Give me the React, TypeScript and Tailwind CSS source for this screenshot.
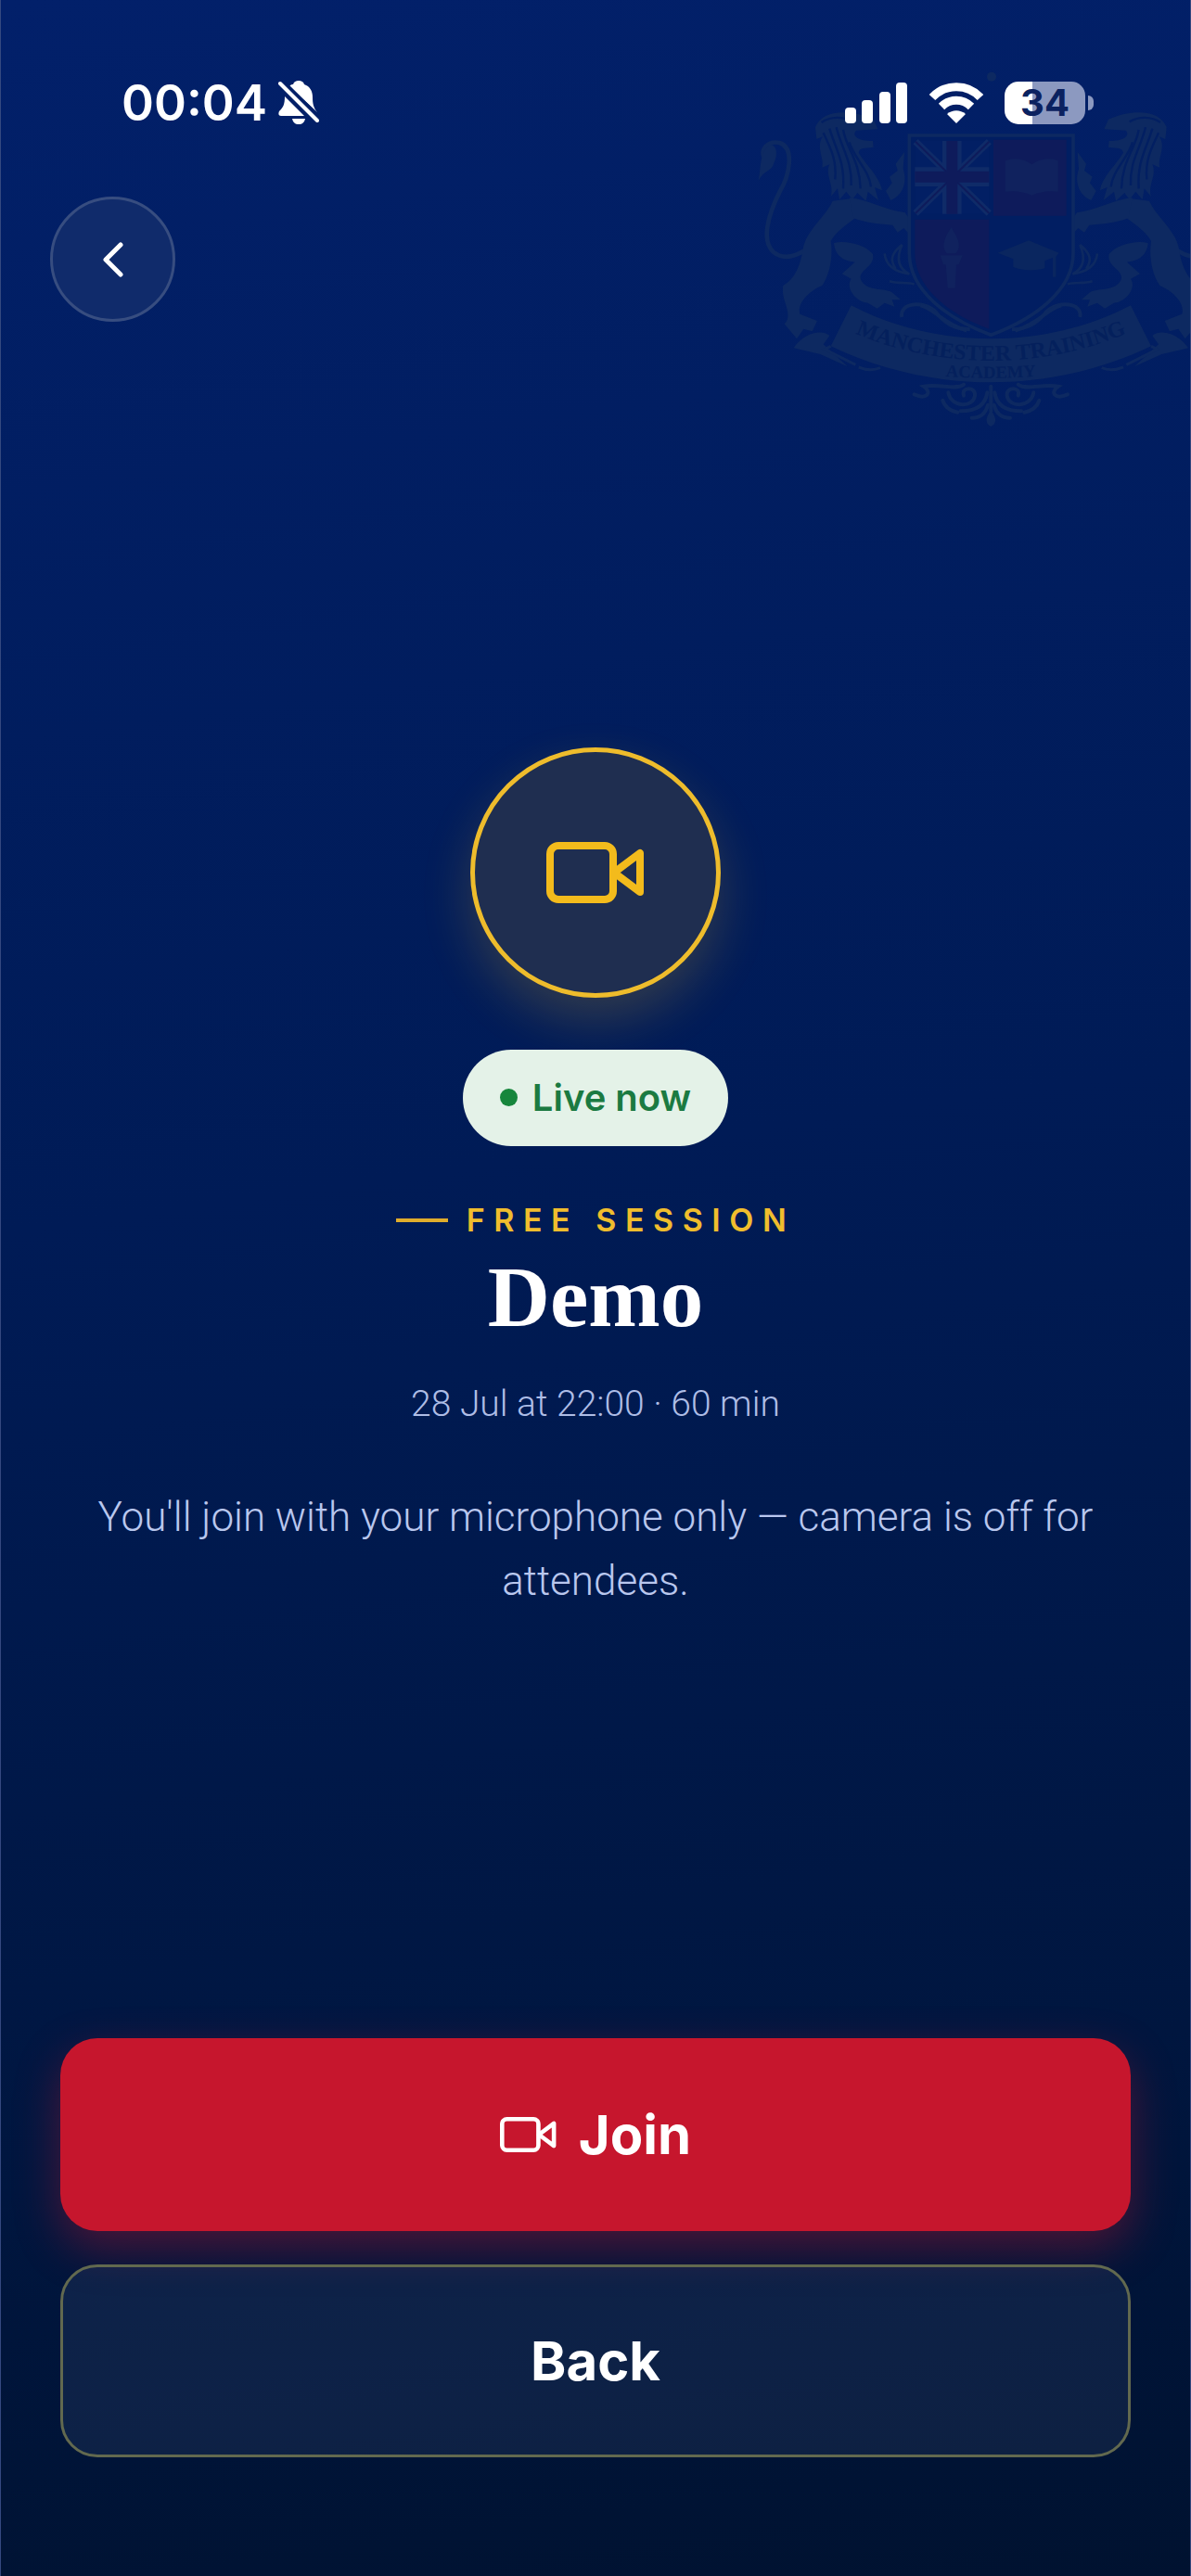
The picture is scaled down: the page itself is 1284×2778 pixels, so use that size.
import type { ReactNode } from "react"

interface IVideoIcon {
  className: string
  strokeWidth: number
}

const VideoIcon = ({ className, strokeWidth }: IVideoIcon) => (
  <svg
    viewBox="0 0 106 66"
    className={className}
    fill="none"
    stroke="currentColor"
    strokeWidth={strokeWidth}
    strokeLinejoin="round"
    aria-hidden="true"
  >
    <rect x="4" y="4" width="68" height="58" rx="9" />
    <path d="M73 33 L101 12 V54 Z" />
  </svg>
)

const BellOffIcon = () => (
  <svg viewBox="0 0 44 48" className="h-12 w-11" fill="#fff" aria-hidden="true">
    <path d="M12 6 C14 4 15 4 16 4 C17 1 19 0 22 0 C25 0 27 1 28 4 C34 6 37 11 37 18 C37 25 38 29 42 34 Z" />
    <path d="M7 17 L28 38 H3 C0 38 0 35 1 33 C5 29 7 26 7 17 Z" />
    <path d="M15 41 H29 C28 45 26 47 22 47 C18 47 16 45 15 41 Z" />
    <path d="M2 3 L42 43" stroke="#fff" strokeWidth="4" strokeLinecap="round" />
    <path d="M7 2 L43 38" stroke="#011f67" strokeWidth="3" />
  </svg>
)

const SignalIcon = () => (
  <svg viewBox="0 0 68 44" className="h-11 w-[68px]" fill="#fff" aria-hidden="true">
    <rect x="0" y="27" width="12" height="17" rx="4" />
    <rect x="18" y="19" width="12" height="25" rx="4" />
    <rect x="37" y="10" width="12" height="34" rx="4" />
    <rect x="55" y="0" width="12" height="44" rx="4" />
  </svg>
)

const WifiIcon = () => (
  <svg viewBox="0 0 60 44" className="h-11 w-[60px]" aria-hidden="true">
    <g fill="none" stroke="#fff" strokeWidth="9">
      <path d="M4 16 C18 1 42 1 56 16" />
      <path d="M14 26 C23 17 37 17 46 26" />
    </g>
    <path d="M30 44 L20 34 C26 29 34 29 40 34 Z" fill="#fff" />
  </svg>
)

const Lion = () => (
  <g>
    <path
      d="M142 345 C112 300 150 275 185 282 C235 300 215 390 185 440 C145 520 125 600 165 636 C195 660 235 650 270 628"
      fill="none"
      stroke="#0d2961"
      strokeWidth="14"
    />
    <path d="M116 405 C126 360 116 330 150 288 C182 286 176 330 166 348 C158 376 134 370 116 405 Z" />
    <path d="M300 232 C318 180 400 168 488 206 L502 238 L432 242 C416 260 440 276 486 276 L488 296 C460 302 444 294 440 314 C462 352 508 390 516 436 L492 426 L504 468 L470 440 L464 470 L436 444 L420 466 L400 440 L378 466 L372 430 L350 456 C362 420 330 386 346 352 L322 362 C330 330 300 296 324 262 L304 270 Z" />
    <path d="M356 470 C334 520 276 560 262 616 C252 680 236 720 196 744 C186 790 232 836 200 868 L240 916 L262 884 L290 892 L306 858 L250 836 C240 800 282 760 322 744 C352 700 356 640 350 600 C372 560 420 536 448 510 L420 462 Z" />
    <path d="M410 460 C470 464 522 500 590 508 L612 540 L606 580 L586 558 L566 572 L550 548 C510 546 460 540 424 526 Z" />
    <path d="M588 312 L560 350 L566 372 L540 392 L548 412 L528 438 L544 468 C584 450 598 410 584 366 Z" />
    <path d="M360 606 C400 596 462 612 486 642 C494 684 442 690 446 722 C464 764 516 750 546 764 L576 790 L548 790 L556 812 L524 800 L500 818 L470 800 C430 796 396 750 416 722 L386 706 L428 668 C394 664 364 650 360 606 Z" />
    <path d="M230 946 C262 898 320 884 346 906 L326 934 L404 1006 L316 966 Z" />
    <path d="M524 640 C528 680 560 700 604 706 C570 690 560 660 580 612 C546 640 540 660 560 690 M540 730 C570 740 600 730 620 740" fill="none" stroke="#0d2961" strokeWidth="8" />
    {/* mane strands */}
    <g fill="none" stroke="#021f62" strokeWidth="7">
      <path d="M320 216 C350 196 390 196 420 214" />
      <path d="M326 250 C350 300 370 340 364 400" />
      <path d="M346 236 C364 300 396 340 390 430" />
      <path d="M368 232 C384 300 420 340 416 420" />
      <path d="M390 240 C400 300 444 340 446 430" />
      <path d="M410 280 C424 330 474 370 480 424" />
    </g>
  </g>
)

const Crest = () => (
  <svg
    viewBox="0 0 1512 1260"
    className="pointer-events-none absolute top-[60px] right-0 -z-10 h-[420px] w-[504px]"
    fill="#0d2961"
    aria-hidden="true"
  >
    <circle cx="870" cy="68" r="15" />
    <Lion />
    <g transform="translate(1736 0) scale(-1 1)">
      <Lion />
    </g>

    {/* shield */}
    <path d="M604 258 H1134 V640 C1134 760 1010 850 868 904 C726 850 604 760 604 640 Z" fill="#011e62" />
    <path d="M622 276 H862 V512 H622 Z" fill="#021f64" />
    <path d="M876 272 H1112 V518 H876 Z" fill="#0e1b5b" />
    <path d="M622 530 H862 V884 C730 836 622 750 622 640 Z" fill="#0e1b5b" />
    <g stroke="#0f2b68" fill="none">
      <path d="M624 278 L862 510 M862 278 L624 510" strokeWidth="22" />
      <path d="M742 276 V512 M622 392 H862" strokeWidth="62" />
    </g>
    <g stroke="#0e1b5b" fill="none">
      <path d="M624 278 L862 510 M862 278 L624 510" strokeWidth="6" />
      <path d="M742 276 V512 M622 392 H862" strokeWidth="36" />
    </g>
    <path d="M915 340 C945 328 975 334 1000 352 C1025 334 1055 328 1085 340 V440 C1055 436 1025 440 1000 452 C975 440 945 436 915 440 Z" fill="#10225e" />
    <path d="M740 556 C716 590 706 620 726 640 H754 C776 616 760 590 740 556 Z M704 646 H776 L764 676 H756 L752 752 H728 L722 676 H714 Z" fill="#10225e" />
    <path d="M890 638 L990 598 L1088 638 L1078 650 V716 H1068 V654 L1042 664 V688 C1010 698 970 696 940 684 V658 Z" fill="#0a265f" />
    <path
      d="M604 258 H1134 V640 C1134 760 1010 850 868 904 C726 850 604 760 604 640 Z"
      fill="none"
      stroke="#0d2961"
      strokeWidth="11"
    />

    {/* scrollwork between shield and ribbon */}
    <g fill="none" stroke="#0d2961" strokeWidth="12">
      <path d="M580 846 C570 800 650 790 690 830 C720 870 760 886 800 886" />
      <path d="M1156 846 C1166 800 1086 790 1046 830 C1016 870 976 886 936 886" />
      <path d="M640 808 C690 820 700 860 790 890" />
      <path d="M1096 808 C1046 820 1036 860 946 890" />
    </g>

    {/* ribbon */}
    <path d="M416 808 C690 952 1046 952 1320 808 L1386 940 C1060 1096 676 1096 350 940 Z" />
    <g fill="none" stroke="#0d2961" strokeWidth="9">
      <path d="M350 940 L330 950 L430 1000 M440 1008 C470 1020 490 1018 510 1010" />
      <path d="M1386 940 L1406 950 L1306 1000 M1296 1008 C1266 1020 1246 1018 1226 1010" />
    </g>
    <path id="ribbon-upper" d="M400 886 C690 1020 1046 1020 1336 886" fill="none" />
    <path id="ribbon-lower" d="M680 1034 C800 1046 936 1046 1056 1034" fill="none" />
    <g fill="#04205c" fontFamily="'Liberation Serif', serif" fontWeight="700" textAnchor="middle">
      <text fontSize="72">
        <textPath href="#ribbon-upper" startOffset="50%">
          MANCHESTER TRAINING
        </textPath>
      </text>
      <text fontSize="56">
        <textPath href="#ribbon-lower" startOffset="50%">
          ACADEMY
        </textPath>
      </text>
    </g>

    {/* foliage under the ribbon */}
    <g fill="none" stroke="#0d2961" strokeWidth="12" strokeLinecap="round">
      <path d="M868 1070 V1150" />
      <path d="M620 1096 C660 1114 680 1090 650 1070 C700 1060 760 1084 780 1064" />
      <path d="M1116 1096 C1076 1114 1056 1090 1086 1070 C1036 1060 976 1084 956 1064" />
      <path d="M780 1100 C770 1070 820 1070 816 1100 C810 1140 740 1140 730 1090" />
      <path d="M956 1100 C966 1070 916 1070 920 1100 C926 1140 996 1140 1006 1090" />
      <path d="M856 1090 C850 1130 820 1150 770 1150 M880 1090 C886 1130 916 1150 966 1150" />
      <path d="M712 1116 C720 1140 740 1150 760 1154 M1024 1116 C1016 1140 996 1150 976 1154" />
      <path d="M858 1130 C850 1160 830 1172 806 1172 M878 1130 C886 1160 906 1172 930 1172" />
    </g>
    <path d="M868 1140 C874 1160 884 1170 882 1182 C880 1194 874 1196 868 1200 C862 1196 856 1194 854 1182 C852 1170 862 1160 868 1140 Z" />
  </svg>
)

const StatusBar = () => (
  <div className="flex items-center justify-between pt-[84px] pr-[104px] pl-[130px]">
    <div className="flex items-center gap-3">
      <span className="text-[53px] leading-[54px] font-semibold">00:04</span>
      <BellOffIcon />
    </div>
    <div className="flex items-center gap-[22px]">
      <SignalIcon />
      <WifiIcon />
      <div className="flex items-center gap-[3px]">
        <span className="flex h-[46px] w-[87px] items-center justify-center rounded-[15px] bg-[linear-gradient(90deg,#fff_34%,#8c99c0_34%)] text-[40px] leading-none font-bold text-[#0b2260]">
          34
        </span>
        <span className="h-4 w-[6px] rounded-r-full bg-[#8c99c0]" />
      </div>
    </div>
  </div>
)

interface IActionButton {
  className: string
  children: ReactNode
}

const ActionButton = ({ className, children }: IActionButton) => (
  <button
    type="button"
    className={`flex h-[208px] w-full items-center justify-center gap-6 rounded-[40px] text-[58px] leading-none font-bold ${className}`}
  >
    {children}
  </button>
)

const App = () => {
  return (
    <div className="relative isolate flex min-h-screen flex-col overflow-hidden border-x border-[#34487f] bg-[linear-gradient(172deg,#02206a_0%,#001b56_45%,#00163f_80%,#001230_100%)] font-['Inter','Liberation_Sans',sans-serif] text-white">
      <Crest />
      <StatusBar />

      <header className="mt-[74px] pl-[53px]">
        <button
          type="button"
          aria-label="Go back"
          className="flex size-[135px] items-center justify-center rounded-full border-3 border-[#374d80] bg-[#102b6b]"
        >
          <svg viewBox="0 0 22 38" className="h-[38px] w-[22px]" fill="none" stroke="#fff" strokeWidth="5" strokeLinecap="round" strokeLinejoin="round" aria-hidden="true">
            <path d="M19 3 L3 19 L19 35" />
          </svg>
        </button>
      </header>

      <main className="flex flex-1 flex-col items-center justify-center px-16 text-center">
        <div className="flex size-[270px] items-center justify-center rounded-full border-5 border-[#eebc2c] bg-[#1f2e50] text-[#f3bb1c] shadow-[0_24px_54px_rgba(243,187,28,0.2)]">
          <VideoIcon className="h-[66px] w-[106px]" strokeWidth={8} />
        </div>

        <p className="mt-14 flex h-[104px] items-center gap-4 rounded-full bg-[#e4f2e8] px-10 text-[40px] leading-none font-semibold text-[#1b7a41]">
          <span className="size-[19px] rounded-full bg-[#16863c]" />
          Live now
        </p>

        <p className="mt-14 flex items-center gap-5 text-[34px] leading-[48px] font-semibold tracking-[0.28em] text-[#f0bd2d]">
          <span className="h-1 w-14 bg-[#e0ad2c]" />
          FREE SESSION
        </p>
        <h1 className="font-['Liberation_Serif',serif] text-[93px] leading-[118px] font-bold">Demo</h1>
        <p className="mt-7 font-['Roboto','Liberation_Sans',sans-serif] text-[39px] leading-[56px] font-light text-[#aebde6]">
          28 Jul at 22:00 · 60 min
        </p>
        <p className="mt-15 font-['Roboto','Liberation_Sans',sans-serif] text-[44px] leading-[69px] font-light text-[#b9c7ee]">
          You'll join with your microphone only — camera is off for attendees.
        </p>
      </main>

      <footer className="flex flex-col gap-9 px-16 pb-32">
        <ActionButton className="bg-[#c6162d] shadow-[0_18px_48px_rgba(198,22,45,0.38)]">
          <VideoIcon className="h-[38px] w-[61px]" strokeWidth={8} />
          Join
        </ActionButton>
        <ActionButton className="border-3 border-[#62694f] bg-[#6b82b0]/12">Back</ActionButton>
      </footer>
    </div>
  )
}

export default App
